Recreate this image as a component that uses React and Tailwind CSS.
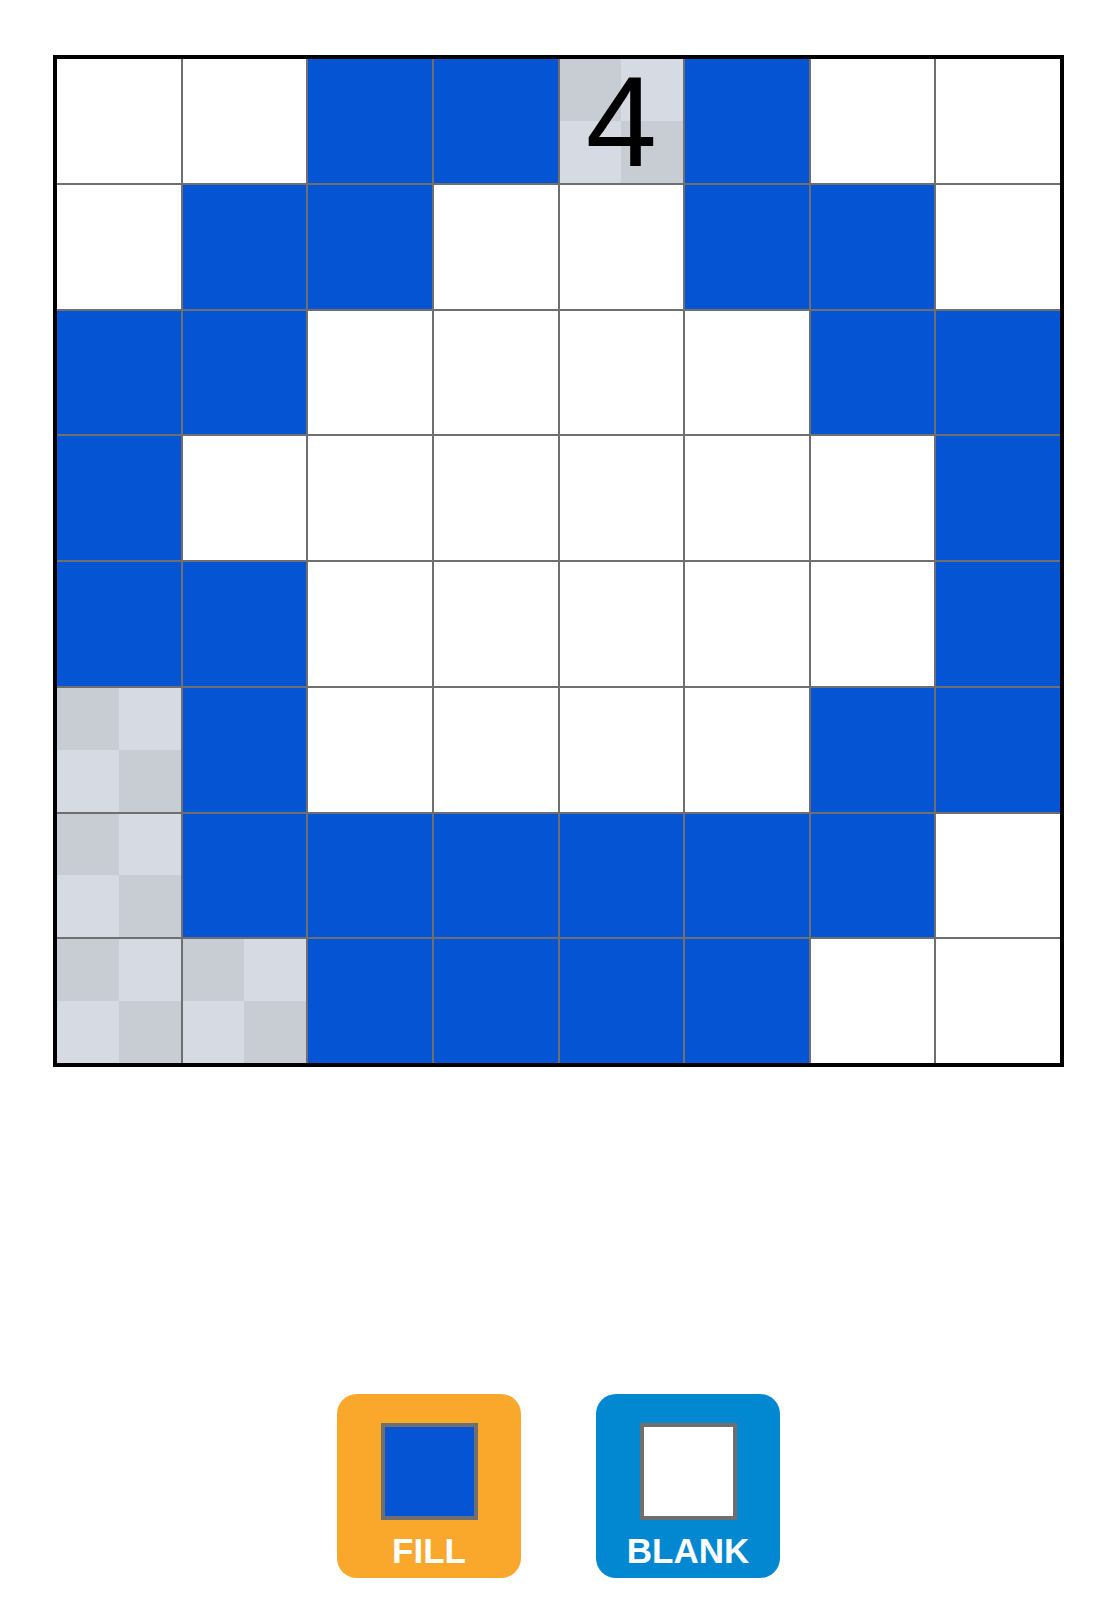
import React from "react";

// 0 = blanc, 1 = rempli, 2 = indice (damier), 4 = indice avec chiffre
const GRID = [
  [0, 0, 1, 1, 4, 1, 0, 0],
  [0, 1, 1, 0, 0, 1, 1, 0],
  [1, 1, 0, 0, 0, 0, 1, 1],
  [1, 0, 0, 0, 0, 0, 0, 1],
  [1, 1, 0, 0, 0, 0, 0, 1],
  [2, 1, 0, 0, 0, 0, 1, 1],
  [2, 1, 1, 1, 1, 1, 1, 0],
  [2, 2, 1, 1, 1, 1, 0, 0],
];

function Checker({ children }) {
  return (
    <div className="relative w-full h-full grid grid-cols-2 grid-rows-2">
      <div className="bg-[#c8ccd3]" />
      <div className="bg-[#d6dae2]" />
      <div className="bg-[#d6dae2]" />
      <div className="bg-[#c8ccd3]" />
      {children && (
        <span className="absolute inset-0 flex items-center justify-center pt-[3px] text-[128px] leading-none text-black [font-family:'Liberation_Sans',Arial,sans-serif]">
          {children}
        </span>
      )}
    </div>
  );
}

function Cell({ v }) {
  if (v === 1) return <div className="bg-[#0454d3]" />;
  if (v === 2) return <Checker />;
  if (v === 4) return <Checker>4</Checker>;
  return <div className="bg-white" />;
}

function ToolButton({ label, bg, fill }) {
  return (
    <button className={`w-[184px] h-[184px] rounded-[20px] ${bg} flex flex-col items-center pt-[29px]`}>
      <div className={`w-[97px] h-[97px] border-4 border-[#6f6f6f] ${fill}`} />
      <span className="mt-[13px] text-[35px] leading-[35px] font-bold text-white [font-family:'Liberation_Sans',Arial,sans-serif]">
        {label}
      </span>
    </button>
  );
}

export default function App() {
  return (
    <div className="w-[1117px] min-h-[1600px] bg-white pt-[55px] [font-family:'Liberation_Sans',Arial,sans-serif]">
      <div className="mx-auto w-[1011px] h-[1012px] border-4 border-black bg-[#6f6f6f] grid grid-cols-8 grid-rows-8 gap-[2px]">
        {GRID.flat().map((v, i) => (
          <Cell key={i} v={v} />
        ))}
      </div>

      <div className="mt-[327px] flex justify-center gap-[75px]">
        <ToolButton label="FILL" bg="bg-[#f9a82c]" fill="bg-[#0454d3]" />
        <ToolButton label="BLANK" bg="bg-[#0288d1]" fill="bg-white" />
      </div>
    </div>
  );
}
